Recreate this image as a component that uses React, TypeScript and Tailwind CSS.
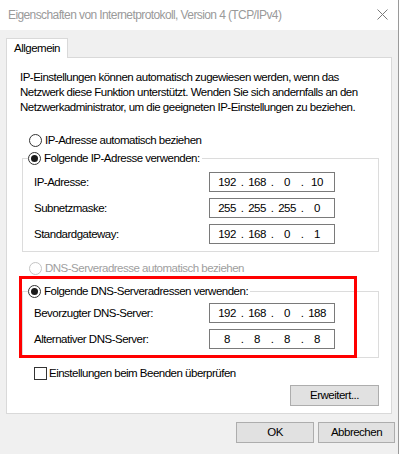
import React from 'react';

const font = "font-['Segoe_UI','Liberation_Sans',Arial,sans-serif]";

const Radio: React.FC<{ checked?: boolean; disabled?: boolean; label: string }> = ({ checked, disabled, label }) => (
  <div className="flex items-center h-[16px] gap-[3px]">
    <span
      className={`w-[13px] h-[13px] rounded-full border bg-white flex items-center justify-center ${
        disabled ? 'border-[#c4c4c4]' : 'border-[#333333]'
      }`}
    >
      {checked && <span className="w-[7px] h-[7px] rounded-full bg-[#1a1a1a]" />}
    </span>
    <span className={disabled ? 'text-[#a0a0a0]' : 'text-black'}>{label}</span>
  </div>
);

const IpField: React.FC<{ parts: string[] }> = ({ parts }) => (
  <div className="w-[126px] h-[20px] border border-[#7a7a7a] bg-white flex items-center pl-[5px]">
    {parts.map((p, i) => (
      <React.Fragment key={i}>
        <span className="w-[24px] text-center">{p}</span>
        {i < 3 && <span className="w-[6px] text-center">.</span>}
      </React.Fragment>
    ))}
  </div>
);

const FieldRow: React.FC<{ label: string; parts: string[] }> = ({ label, parts }) => (
  <div className="flex items-center pl-[11px] pr-[43px]">
    <span className="flex-1">{label}</span>
    <IpField parts={parts} />
  </div>
);

const Button: React.FC<{ label: string; width: string }> = ({ label, width }) => (
  <button className={`${width} h-[21px] bg-[#e1e1e1] border border-[#adadad] text-black flex items-center justify-center`}>
    {label}
  </button>
);

export default function App() {
  return (
    <div className={`${font} relative w-[399px] h-[454px] bg-[#f0f0f0] border-r border-[#9a9a9a] text-[11.5px] leading-[15px] tracking-[-0.5px] whitespace-nowrap flex flex-col`}>
      {/* title bar */}
      <div className="h-[30px] bg-white flex items-center justify-between pl-[8px] pr-[10px]">
        <span className="text-[#9a9a9a] text-[12px] tracking-[-0.6px]">
          Eigenschaften von Internetprotokoll, Version 4 (TCP/IPv4)
        </span>
        <svg width="11" height="11" viewBox="0 0 11 11" className="mb-[2px]">
          <path d="M0.5 0.5 L10.5 10.5 M10.5 0.5 L0.5 10.5" stroke="#7a7a7a" strokeWidth="1" />
        </svg>
      </div>

      <div className="flex-1 flex flex-col px-[6px] pt-[8px]">
        {/* tab */}
        <div className="w-[62px] h-[20px] bg-white border border-b-0 border-[#d9d9d9] pl-[7px] flex items-center relative z-10 -mb-[1px]">
          Allgemein
        </div>

        {/* panel */}
        <div className="h-[357px] bg-white border border-[#d9d9d9] flex flex-col">
          <p className="pt-[12px] pl-[13px]">
            IP-Einstellungen können automatisch zugewiesen werden, wenn das
            <br />
            Netzwerk diese Funktion unterstützt. Wenden Sie sich andernfalls an den
            <br />
            Netzwerkadministrator, um die geeigneten IP-Einstellungen zu beziehen.
          </p>

          <div className="mt-[17px] pl-[22px]">
            <Radio label="IP-Adresse automatisch beziehen" />
          </div>

          {/* group 1 */}
          <div className="mt-[10px] ml-[15px] mr-[12px] border border-[#dcdcdc] pb-[7px]">
            <div className="-mt-[9px] ml-[5px] pr-[2px] bg-white w-fit">
              <Radio checked label="Folgende IP-Adresse verwenden:" />
            </div>
            <div className="mt-[6px] flex flex-col gap-[6px]">
              <FieldRow label="IP-Adresse:" parts={['192', '168', '0', '10']} />
              <FieldRow label="Subnetzmaske:" parts={['255', '255', '255', '0']} />
              <FieldRow label="Standardgateway:" parts={['192', '168', '0', '1']} />
            </div>
          </div>

          <div className="mt-[8px] pl-[22px]">
            <Radio disabled label="DNS-Serveradresse automatisch beziehen" />
          </div>

          {/* group 2 */}
          <div className="mt-[15px] ml-[15px] mr-[12px] border border-[#dcdcdc] pb-[8px]">
            <div className="-mt-[9px] ml-[5px] pr-[2px] bg-white w-fit">
              <Radio checked label="Folgende DNS-Serveradressen verwenden:" />
            </div>
            <div className="mt-[4px] flex flex-col gap-[6px]">
              <FieldRow label="Bevorzugter DNS-Server:" parts={['192', '168', '0', '188']} />
              <FieldRow label="Alternativer DNS-Server:" parts={['8', '8', '8', '8']} />
            </div>
          </div>

          <div className="mt-[7px] pl-[27px] flex items-center h-[16px] gap-[2px]">
            <span className="w-[13px] h-[13px] border border-[#333333] bg-white" />
            <span>Einstellungen beim Beenden überprüfen</span>
          </div>

          <div className="mt-[4px] mr-[12px] flex justify-end">
            <Button label="Erweitert..." width="w-[89px]" />
          </div>
        </div>

        {/* dialog buttons */}
        <div className="mt-[8px] flex justify-end gap-[4px] -mr-[3px]">
          <Button label="OK" width="w-[78px]" />
          <Button label="Abbrechen" width="w-[77px]" />
        </div>
      </div>

      {/* red annotation */}
      <div className="absolute left-[19px] top-[276px] w-[338px] h-[82px] border-[3px] border-[#ff0000] pointer-events-none" />
    </div>
  );
}
